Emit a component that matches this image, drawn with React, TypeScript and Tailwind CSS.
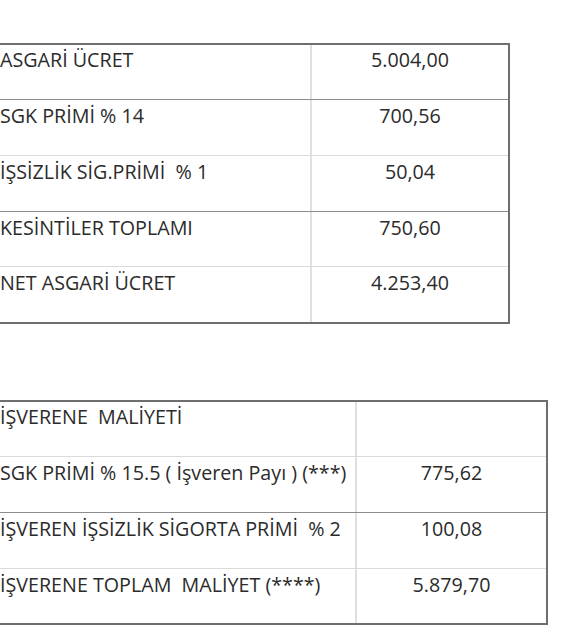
import React from "react";

type Row = { label: string; value: string; h: string; border: "dark" | "light" | "top" };

const t1: Row[] = [
  { label: "ASGARİ ÜCRET", value: "5.004,00", h: "h-[56px]", border: "top" },
  { label: "SGK PRİMİ % 14", value: "700,56", h: "h-[56px]", border: "dark" },
  { label: "İŞSİZLİK SİG.PRİMİ  % 1", value: "50,04", h: "h-[56px]", border: "light" },
  { label: "KESİNTİLER TOPLAMI", value: "750,60", h: "h-[55px]", border: "dark" },
  { label: "NET ASGARİ ÜCRET", value: "4.253,40", h: "h-[56px]", border: "light" },
];

const t2: Row[] = [
  { label: "İŞVERENE  MALİYETİ", value: "", h: "h-[56px]", border: "top" },
  { label: "SGK PRİMİ % 15.5 ( İşveren Payı ) (***)", value: "775,62", h: "h-[56px]", border: "light" },
  { label: "İŞVEREN İŞSİZLİK SİGORTA PRİMİ  % 2", value: "100,08", h: "h-[56px]", border: "dark" },
  { label: "İŞVERENE TOPLAM  MALİYET (****)", value: "5.879,70", h: "h-[55px]", border: "light" },
];

function Table({ rows, width, col1 }: { rows: Row[]; width: string; col1: string }) {
  return (
    <div className={`${width} border-r-2 border-b-2 border-[#6e6e6e]`}>
      {rows.map((r, i) => {
        const b =
          r.border === "top"
            ? "border-t-2 border-[#6e6e6e]"
            : r.border === "dark"
            ? "border-t border-[#8c8c8c]"
            : "border-t border-[#dadada]";
        const pt = r.border === "top" ? "pt-[1px]" : "pt-[2px]";
        return (
          <div key={i} className={`flex ${r.h} ${b}`}>
            <div className={`${col1} shrink-0 ${pt} whitespace-pre`}>{r.label}</div>
            <div className={`flex-1 border-l-2 border-[#e0e0e0] text-center ${pt} whitespace-pre`}>
              {r.value}
            </div>
          </div>
        );
      })}
    </div>
  );
}

export default function App() {
  return (
    <div
      className="w-[570px] h-[639px] bg-white text-[#2b2b2b] text-[19.7px] leading-[28px] overflow-hidden"
      style={{ fontFamily: '"Open Sans", "Noto Sans", sans-serif' }}
    >
      <div className="pt-[43px]">
        <Table rows={t1} width="w-[510px]" col1="w-[310px]" />
      </div>
      <div className="pt-[76px]">
        <Table rows={t2} width="w-[548px]" col1="w-[355px]" />
      </div>
    </div>
  );
}
